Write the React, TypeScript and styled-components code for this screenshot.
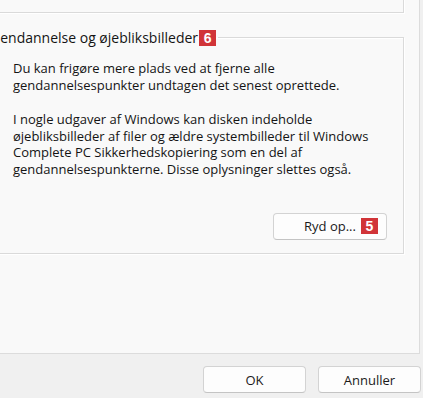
import React from 'react';
import styled, { createGlobalStyle } from 'styled-components';

const GlobalStyle = createGlobalStyle`
  html, body {
    margin: 0;
    padding: 0;
    background: #f0f0f0;
  }
  body {
    font-family: 'Open Sans', 'Noto Sans', Arial, sans-serif;
    font-size: 13px;
    color: #1a1a1a;
  }
`;

const Window = styled.div`
  width: 423px;
  height: 398px;
  display: flex;
  flex-direction: column;
  overflow: hidden;
  background: #f0f0f0;
`;

const Panel = styled.div`
  width: 420px;
  height: 354px;
  box-sizing: border-box;
  background: #f9f9f9;
  border-right: 1px solid #dcdcdc;
  border-bottom: 1px solid #dcdcdc;
  overflow: hidden;
  display: flex;
  flex-direction: column;
  gap: 16px;
`;

const GroupBox = styled.fieldset<{ $height?: number; $offsetTop?: number }>`
  margin: ${(p) => p.$offsetTop ?? 0}px 15px 0 -20px;
  padding: 0;
  height: ${(p) => (p.$height ? `${p.$height}px` : 'auto')};
  border: 1px solid #dadada;
  box-shadow: 1px 1px 0 #ffffff, inset 1px 1px 0 #ffffff;
  min-width: 0;
  box-sizing: border-box;
`;

const Legend = styled.legend`
  margin-left: 9px;
  padding: 0 2px 0 0;
  display: flex;
  align-items: center;
  gap: 1px;
  font-size: 14px;
  line-height: 17px;
  color: #141414;
`;

const Badge = styled.span`
  display: inline-flex;
  align-items: center;
  justify-content: center;
  width: 17px;
  height: 16px;
  background: #d13438;
  color: #ffffff;
  font-family: 'Liberation Sans', Arial, sans-serif;
  font-weight: 700;
  font-size: 14px;
  line-height: 1;
`;

const OverlayBadge = styled(Badge)`
  position: absolute;
  right: 8px;
  top: 50%;
  transform: translateY(-50%);
`;

const GroupBody = styled.div`
  padding: 14px 16px 13px 32px;
  display: flex;
  flex-direction: column;
`;

const Paragraph = styled.p`
  margin: 0 0 18px 0;
  line-height: 16.6px;
  font-size: 13px;
  color: #141414;
  &:last-of-type {
    margin-bottom: 0;
  }
`;

const ActionRow = styled.div`
  display: flex;
  justify-content: flex-end;
  margin-top: 35px;
`;

const Button = styled.button<{ $width?: number }>`
  position: relative;
  width: ${(p) => p.$width ?? 103}px;
  height: 27px;
  box-sizing: border-box;
  background: #fdfdfd;
  border: 1px solid #d3d3d3;
  border-bottom-color: #c4c4c4;
  border-radius: 4px;
  font-family: 'Open Sans', 'Noto Sans', Arial, sans-serif;
  font-size: 13px;
  color: #1a1a1a;
  padding: 0;
  cursor: default;
`;

const Footer = styled.div`
  flex: 1;
  display: flex;
  justify-content: flex-end;
  align-items: flex-start;
  gap: 12px;
  padding: 12px 2px 0 0;
`;

export default function App() {
  return (
    <>
      <GlobalStyle />
      <Window>
        <Panel>
          <GroupBox $height={40} $offsetTop={-27} />
          <GroupBox>
            <Legend>
              Gendannelse og øjebliksbilleder<Badge>6</Badge>
            </Legend>
            <GroupBody>
              <Paragraph>
                Du kan frigøre mere plads ved at fjerne alle
                <br />
                gendannelsespunkter undtagen det senest oprettede.
              </Paragraph>
              <Paragraph>
                I nogle udgaver af Windows kan disken indeholde
                <br />
                øjebliksbilleder af filer og ældre systembilleder til Windows
                <br />
                Complete PC Sikkerhedskopiering som en del af
                <br />
                gendannelsespunkterne. Disse oplysninger slettes også.
              </Paragraph>
              <ActionRow>
                <Button $width={114}>
                  Ryd op...
                  <OverlayBadge>5</OverlayBadge>
                </Button>
              </ActionRow>
            </GroupBody>
          </GroupBox>
        </Panel>
        <Footer>
          <Button>OK</Button>
          <Button>Annuller</Button>
        </Footer>
      </Window>
    </>
  );
}
